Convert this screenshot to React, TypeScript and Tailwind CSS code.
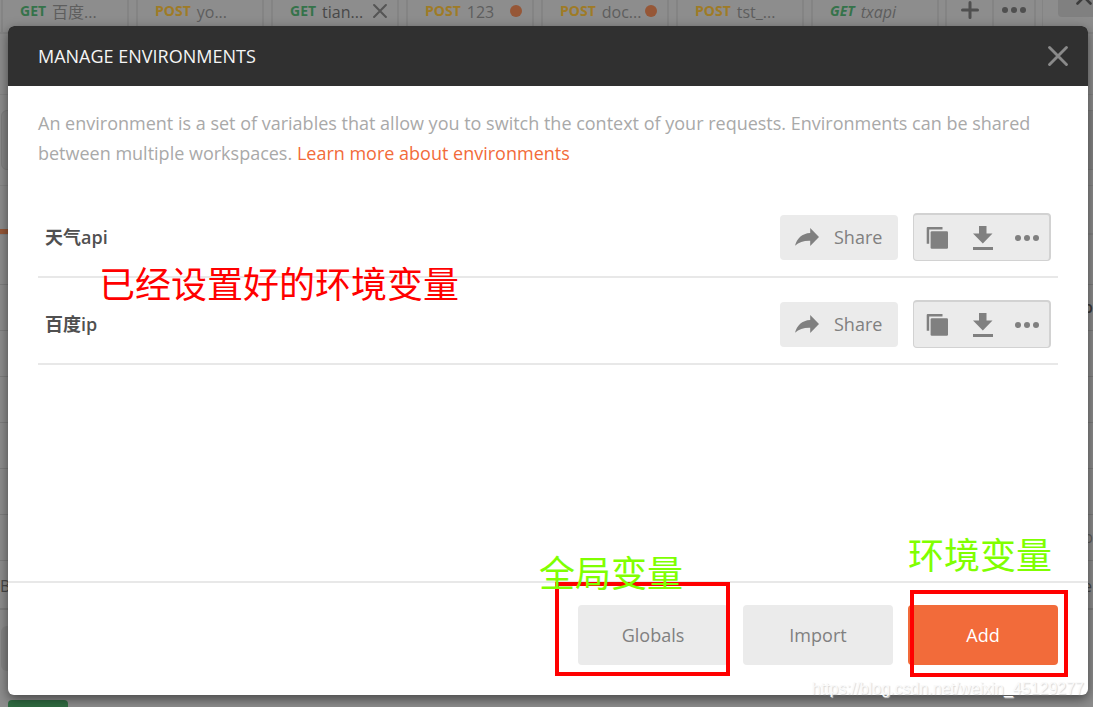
import React from "react";

const LATIN = "font-['Open_Sans','Noto_Sans_CJK_SC',sans-serif]";

type Tab = { method: "GET" | "POST"; name: string; mark?: "close" | "dot"; preview?: boolean };

const tabs: Tab[] = [
  { method: "GET", name: "百度..." },
  { method: "POST", name: "yo..." },
  { method: "GET", name: "tian...", mark: "close" },
  { method: "POST", name: "123", mark: "dot" },
  { method: "POST", name: "doc...", mark: "dot" },
  { method: "POST", name: "tst_..." },
  { method: "GET", name: "txapi", preview: true },
];

function Cross({ className }: { className: string }) {
  return (
    <svg viewBox="0 0 18 18" className={className} fill="none" stroke="currentColor" strokeWidth="2.6" strokeLinecap="round" aria-hidden="true">
      <path d="M1.4 1.4 16.6 16.6M16.6 1.4 1.4 16.6" />
    </svg>
  );
}

function Dots() {
  return (
    <svg viewBox="0 0 24 6" className="h-[6px] w-6" fill="currentColor" aria-hidden="true">
      <circle cx="3" cy="3" r="3" />
      <circle cx="12" cy="3" r="3" />
      <circle cx="21" cy="3" r="3" />
    </svg>
  );
}

function TabStrip() {
  return (
    <div className="flex h-[34px] shrink-0 overflow-hidden border-b-2 border-[#848484]">
      {tabs.map((tab) => (
        <div key={tab.name} className="flex w-[135px] shrink-0 pl-px">
          <div className={`flex h-8 w-[128px] items-start border-x-2 border-[#848484] pr-[10px] pl-[17px] text-[#5e5e5e] ${tab.preview ? "italic" : ""}`}>
            <span className={`mt-[2px] text-sm leading-[18px] font-bold ${tab.method === "GET" ? "text-[#35734a]" : "text-[#9f7b26]"}`}>{tab.method}</span>
            <span className={`ml-[6px] text-base leading-6 whitespace-nowrap ${tab.mark === "close" ? "text-[#484848]" : ""}`}>{tab.name}</span>
            {tab.mark === "close" && (
              <button aria-label="Close tab" className="mt-1 ml-auto text-[#555]">
                <Cross className="size-[14px]" />
              </button>
            )}
            {tab.mark === "dot" && <span className="mt-[5px] ml-auto size-3 shrink-0 rounded-full bg-[#965737]" />}
          </div>
        </div>
      ))}
      <button aria-label="New tab" className="flex h-8 w-[47px] shrink-0 items-start justify-center border-l-2 border-[#848484] pt-px text-[#4f4f4f]">
        <svg viewBox="0 0 18 18" className="size-[18px]" stroke="currentColor" strokeWidth="3" strokeLinecap="round" aria-hidden="true">
          <path d="M9 1.5v15M1.5 9h15" />
        </svg>
      </button>
      <button aria-label="More tabs" className="flex h-8 w-[44px] shrink-0 items-start justify-center border-x-2 border-[#848484] pt-[7px] text-[#4f4f4f]">
        <Dots />
      </button>
      <div className="ml-[6px] flex-1 border-l border-[#848484] pl-[15px]">
        <div className="flex h-[17px] justify-end overflow-hidden rounded-bl bg-[#808080] pr-px text-[#3c3c3c]">
          <svg viewBox="0 0 16 5" className="h-[5px] w-4" fill="none" stroke="currentColor" strokeWidth="2.6" strokeLinecap="round" aria-hidden="true">
            <path d="M1.500 3.500 8-3 14.500 3.500" />
          </svg>
        </div>
      </div>
    </div>
  );
}

function Workspace() {
  return (
    <div className="flex min-h-screen flex-col overflow-hidden bg-[#8d8d8d]" aria-hidden="true">
      <TabStrip />
      <div className="h-[61px] border-b border-[#848484]" />
      <div className="h-[91px] border-b border-[#848484] pt-[15px] pl-px">
        <div className="-mr-2 h-[60px] rounded-md border border-[#7d7d7d] bg-[#858585]" />
      </div>
      <div className="h-[49px] border-b-2 border-[#848484] pt-[43px]">
        <div className="h-[5px] w-16 bg-[#965737]" />
      </div>
      <div className="h-[50px] border-b border-[#7d7d7d]" />
      <div className="h-[46px] border-b border-[#7d7d7d] pt-[10px] text-right text-base font-semibold text-[#3c3c3c]">p</div>
      <div className="h-[46px] border-b border-[#7d7d7d]" />
      <div className="h-[46px] border-b border-[#7d7d7d]" />
      <div className="h-[46px] border-b border-[#7d7d7d]" />
      <div className="h-[46px] border-b border-[#7d7d7d]" />
      <div className="h-[46px] border-b border-[#7d7d7d] pt-[10px] text-right text-base text-[#606060]">p</div>
      <div className="flex h-[49px] justify-between border-b-2 border-[#7d7d7d] pt-[13px] pr-px text-base text-[#484848]">
        <span>B</span>
        <span>e</span>
      </div>
      <div className="h-[90px] pt-4 pl-px">
        <div className="h-[45px] w-24 rounded-md bg-[#838383]" />
      </div>
      <div className="ml-2 h-10 w-[60px] rounded bg-[#2f6b41]" />
    </div>
  );
}

function ShareIcon() {
  return (
    <svg viewBox="0 0 24 18" className="h-[18px] w-6" fill="currentColor" aria-hidden="true">
      <path d="M15.200 0 24 9l-8.800 9v-5.300C9 12.500 4 14 0 17.800 1.800 10.500 7 5.400 15.200 5z" />
    </svg>
  );
}

function CopyIcon() {
  return (
    <svg viewBox="0 0 22 22" className="size-[22px]" fill="currentColor" aria-hidden="true">
      <path d="M1.700 0H16.500V2.500H3.200V16.800H.7V1Q.7 0 1.700 0z" />
      <rect x="4.600" y="4.300" width="17.400" height="17.400" rx="1.200" />
    </svg>
  );
}

function DownloadIcon() {
  return (
    <svg viewBox="0 0 20 24" className="h-6 w-5" fill="currentColor" aria-hidden="true">
      <path d="M6 0h7.500v7.500h6L9.800 17.500 0 7.500h6zM0 21h20v3H0z" />
    </svg>
  );
}

function EnvironmentRow({ name }: { name: string }) {
  return (
    <li className="flex h-[87px] items-center border-b-2 border-[#e8e8e8] pr-[7px] pl-[7px]">
      <span className="flex-1 pt-[7px] text-lg font-semibold text-[#505050]">{name}</span>
      <div className="flex items-center gap-[15px] pt-[7px]">
        <button className="flex h-[45px] w-[118px] items-center gap-[15px] rounded bg-[#ebebeb] pl-[15px] text-lg text-[#808080]">
          <ShareIcon />
          Share
        </button>
        <div className="flex h-12 w-[138px] items-center rounded border border-t-2 border-r-2 border-[#d2d2d2] bg-[#ebebeb] pl-[12px] text-[#808080]">
          <button aria-label={`Duplicate ${name}`}><CopyIcon /></button>
          <button aria-label={`Download ${name}`} className="ml-[25px]"><DownloadIcon /></button>
          <button aria-label={`More actions for ${name}`} className="ml-[22px]"><Dots /></button>
        </div>
      </div>
    </li>
  );
}

export default function App() {
  return (
    <div className={`relative h-screen overflow-hidden ${LATIN}`}>
      <Workspace />

      <div className="absolute inset-0 flex pt-[26px] pr-[5px] pb-3 pl-2">
        <section role="dialog" aria-labelledby="dialog-title" className="relative flex flex-1 flex-col rounded-md bg-white shadow-[0_4px_12px_rgba(0,0,0,0.5)]">
          <header className="flex h-[60px] shrink-0 items-center justify-between rounded-t-md bg-[#303030] pr-5 pl-[30px]">
            <h1 id="dialog-title" className="text-lg font-medium text-[#f5f5f5]">MANAGE ENVIRONMENTS</h1>
            <button aria-label="Close" className="text-[#8a8a8a]">
              <Cross className="size-5" />
            </button>
          </header>

          <div className="flex-1 px-[30px] pt-[22px]">
            <p className="text-lg leading-[30px] text-[#a9a9a9]">
              An environment is a set of variables that allow you to switch the context of your requests. Environments can be shared between multiple workspaces.{" "}
              <a href="#learn" className="text-[#f26b3a]">Learn more about environments</a>
            </p>
            <ul className="mt-[23px]">
              <EnvironmentRow name="天气api" />
              <EnvironmentRow name="百度ip" />
            </ul>
          </div>

          <footer className="flex h-[114px] shrink-0 gap-[15px] border-t-2 border-[#e8e8e8] pt-[22px] pr-[30px]">
            <button className="ml-auto h-[60px] w-[150px] rounded bg-[#ebebeb] text-lg text-[#808080]">Globals</button>
            <button className="h-[60px] w-[150px] rounded bg-[#ebebeb] text-lg text-[#808080]">Import</button>
            <button className="h-[60px] w-[150px] rounded bg-[#f26b3a] text-lg font-medium text-white">Add</button>
          </footer>

          <div className="pointer-events-none absolute right-[358px] bottom-[19px] h-[94px] w-[175px] border-4 border-[#ff0000]" />
          <div className="pointer-events-none absolute right-[20px] bottom-[18px] h-[87px] w-[158px] border-4 border-[#ff0000]" />
          <div className="pointer-events-none absolute top-[233px] left-[91px] text-4xl leading-[52px] whitespace-nowrap text-[#ff0000]">已经设置好的环境变量</div>
          <div className="pointer-events-none absolute right-[405px] bottom-[95px] text-4xl leading-[52px] whitespace-nowrap text-[#80ff00]">全局变量</div>
          <div className="pointer-events-none absolute right-[36px] bottom-[113px] text-4xl leading-[52px] whitespace-nowrap text-[#80ff00]">环境变量</div>
          <div className="pointer-events-none absolute right-1 bottom-[-6px] font-['Liberation_Sans',sans-serif] text-base whitespace-nowrap text-[#fafafa] [text-shadow:1px_1px_1px_#d8d8d8]">https://blog.csdn.net/weixin_45129277</div>
        </section>
      </div>
    </div>
  );
}
